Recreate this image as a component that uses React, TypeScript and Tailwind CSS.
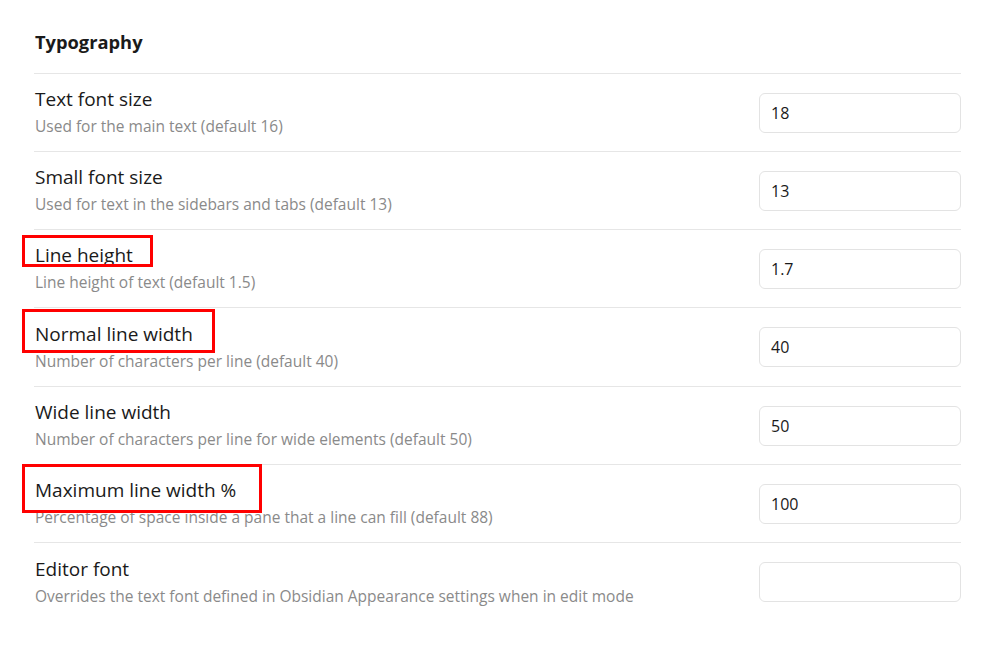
import React from "react";

type Row = { title: string; desc: string; value: string; h: string; box?: { left: number; top: number; w: number; h: number } };

const rows: Row[] = [
  { title: "Text font size", desc: "Used for the main text (default 16)", value: "18", h: "h-[78px]" },
  { title: "Small font size", desc: "Used for text in the sidebars and tabs (default 13)", value: "13", h: "h-[78px]" },
  { title: "Line height", desc: "Line height of text (default 1.5)", value: "1.7", h: "h-[78px]", box: { left: -12, top: 5, w: 131, h: 32 } },
  { title: "Normal line width", desc: "Number of characters per line (default 40)", value: "40", h: "h-[79px]", box: { left: -12, top: 1, w: 193, h: 44 } },
  { title: "Wide line width", desc: "Number of characters per line for wide elements (default 50)", value: "50", h: "h-[78px]" },
  { title: "Maximum line width %", desc: "Percentage of space inside a pane that a line can fill (default 88)", value: "100", h: "h-[78px]", box: { left: -12, top: -1, w: 240, h: 49 } },
  { title: "Editor font", desc: "Overrides the text font defined in Obsidian Appearance settings when in edit mode", value: "", h: "h-[79px]" },
];

export default function App() {
  return (
    <div className="w-[1008px] h-[648px] bg-white overflow-hidden" style={{ fontFamily: '"Segoe UI", "Open Sans", "Noto Sans", sans-serif' }}>
      <div className="ml-[34px] w-[927px]">
        <div className="h-[73px] flex items-center pl-px pt-[11px] text-[18.3px] font-bold text-[#1a1a1a]">Typography</div>
        {rows.map((r, i) => (
          <div key={i} className={`relative ${r.h} border-t border-[#e6e6e6] flex items-center justify-between`}>
            <div className="pl-px flex flex-col">
              <div className="text-[19px] leading-[27px] text-[#1a1a1a]">{r.title}</div>
              <div className="text-[15.5px] leading-[26px] text-[#8a8a8a]">{r.desc}</div>
            </div>
            <div className="w-[202px] h-[40px] rounded-[6px] border border-[#e3e3e3] flex items-center px-[11px] text-[16px] text-[#1a1a1a]">
              {r.value}
            </div>
            {r.box && (
              <div
                className="absolute border-[3px] border-[#ff0000] pointer-events-none"
                style={{ left: r.box.left, top: r.box.top, width: r.box.w, height: r.box.h }}
              />
            )}
          </div>
        ))}
      </div>
    </div>
  );
}
